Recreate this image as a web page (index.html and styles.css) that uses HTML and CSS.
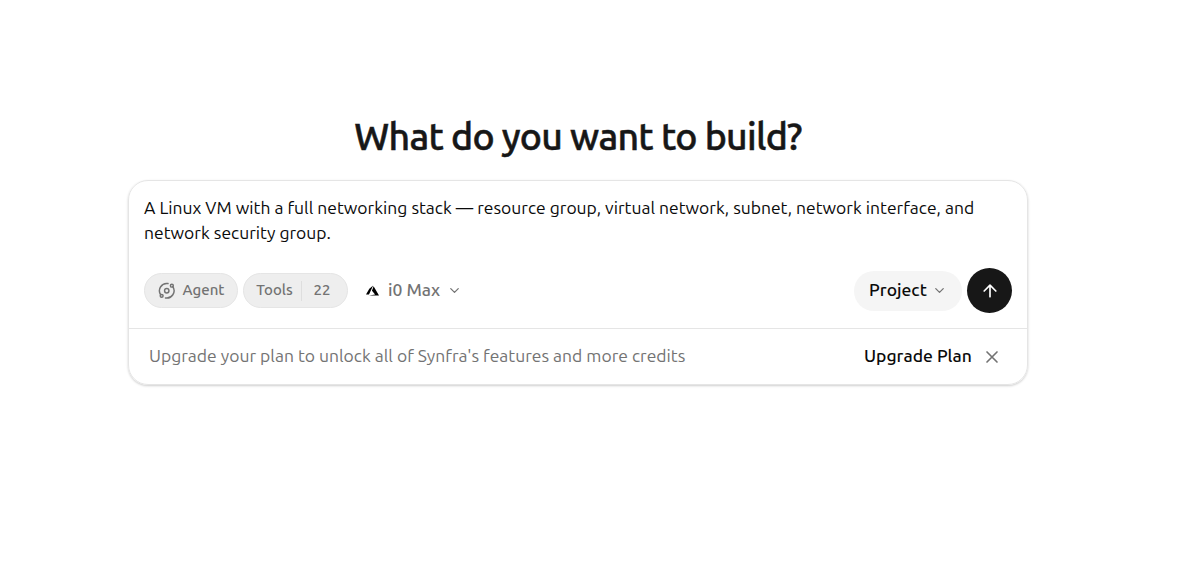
FILE: index.html
```html
<!DOCTYPE html>
<html lang="en">
<head>
    <meta charset="UTF-8">
    <meta name="viewport" content="width=device-width, initial-scale=1.0">
    <title>Synfra</title>
    <link rel="stylesheet" href="styles.css">
</head>
<body>
    <main class="container">
        <h1>What do you want to build?</h1>

        <div class="card">
            <div class="composer">
                <p class="prompt">A Linux VM with a full networking stack — resource group, virtual network, subnet, network interface, and<br>network security group.</p>

                <div class="toolbar">
                    <button class="chip agent">
                        <svg class="icon" width="17.5" height="17.5" viewBox="0 0 24 24">
                            <path d="M20.341 6.484A10 10 0 0 1 10.266 21.85"/>
                            <path d="M3.659 17.516A10 10 0 0 1 13.74 2.152"/>
                            <circle cx="12" cy="12" r="3"/>
                            <circle cx="19" cy="5" r="2"/>
                            <circle cx="5" cy="19" r="2"/>
                        </svg>
                        <span class="label">Agent</span>
                    </button>
                    <button class="chip tools">
                        <span class="label tools-label">Tools</span>
                        <span class="separator"></span>
                        <span class="label">22</span>
                    </button>
                    <button class="model">
                        <svg class="azure" width="13" height="13" viewBox="0 0 24 24">
                            <path d="M5.483 21.3H24L14.025 4.013l-3.038 8.347 5.836 6.938L5.483 21.3zM13.23 2.7L6.105 8.677 0 19.253h5.505v.014L13.23 2.7z"/>
                        </svg>
                        <span class="label model-label">i0 Max</span>
                        <svg class="icon" width="15" height="15" viewBox="0 0 24 24"><path d="m6 9 6 6 6-6"/></svg>
                    </button>

                    <button class="project">
                        <span class="label project-label">Project</span>
                        <svg class="icon" width="15" height="15" viewBox="0 0 24 24"><path d="m6 9 6 6 6-6"/></svg>
                    </button>
                    <button class="send" aria-label="Send">
                        <svg class="icon" width="20" height="20" viewBox="0 0 24 24"><path d="m5 12 7-7 7 7M12 19V5"/></svg>
                    </button>
                </div>
            </div>

            <div class="upgrade">
                <span class="label upgrade-text">Upgrade your plan to unlock all of Synfra's features and more credits</span>
                <a class="label upgrade-link">Upgrade Plan</a>
                <button class="close" aria-label="Close">
                    <svg class="icon" width="20" height="20" viewBox="0 0 24 24"><path d="M18 6 6 18M6 6l12 12"/></svg>
                </button>
            </div>
        </div>
    </main>
</body>
</html>
```

FILE: styles.css
```css
:root {
    --text: #171717;
    --muted: #737373;
    --border: #e5e5e5;
    --chip-bg: #eeeeee;
}

* {
    box-sizing: border-box;
}

body {
    min-height: 100vh;
    margin: 0;
    background: white;
    color: #0a0a0a;
    font-family: Ubuntu, 'Noto Sans', sans-serif;
}

.container {
    width: 900px;
    margin-left: 128px;
    padding-top: 111px;
}

h1 {
    margin: 0 0 19px;
    color: var(--text);
    font-size: 37.5px;
    line-height: 50px;
    font-weight: 500;
    text-align: center;
    letter-spacing: -0.75px;
    -webkit-text-stroke: 0.5px var(--text);
}

.card {
    height: 205px;
    border: 1px solid var(--border);
    border-radius: 20px;
    box-shadow: 0 1px 3px rgba(0, 0, 0, 0.1), 0 1px 2px rgba(0, 0, 0, 0.1);
}

.composer {
    height: 148px;
    padding: 14px 15px;
    border-bottom: 1px solid var(--border);
}

.prompt {
    margin: 0;
    font-size: 17.5px;
    line-height: 25px;
    white-space: nowrap;
}

.toolbar {
    display: flex;
    align-items: center;
    height: 45px;
    margin-top: 23px;
}

button {
    display: flex;
    align-items: center;
    padding: 0;
    border: none;
    background: none;
    color: var(--muted);
    font-family: inherit;
    font-size: 15px;
    line-height: 20px;
    white-space: nowrap;
    cursor: pointer;
}

/* lifts the text so it looks centered beside the icons */
.label {
    padding-bottom: 2px;
}

.icon {
    flex-shrink: 0;
    fill: none;
    stroke: currentColor;
    stroke-width: 2;
    stroke-linecap: round;
    stroke-linejoin: round;
}

.chip {
    height: 35px;
    border: 1px solid var(--border);
    border-radius: 18px;
    background: var(--chip-bg);
    font-weight: 500;
}

.agent {
    width: 94px;
    padding-left: 13px;
    gap: 7px;
}

.tools {
    width: 105px;
    margin-left: 5px;
    padding-left: 12px;
}

.tools-label {
    width: 37px;
}

.separator {
    width: 1px;
    height: 20px;
    margin: 0 12px 0 7.5px;
    background: #dedede;
}

.model {
    margin-left: 18px;
    font-size: 17.5px;
    line-height: 25px;
    font-weight: 500;
}

.azure {
    fill: black;
}

.model-label {
    width: 52px;
    margin: 0 7px 0 9px;
}

.project {
    width: 108px;
    height: 40px;
    margin-left: auto;
    padding-left: 15px;
    border-radius: 20px;
    background: #f5f5f5;
    font-size: 17.5px;
    line-height: 25px;
}

.project-label {
    width: 58px;
    margin-right: 5px;
    color: #0a0a0a;
    font-weight: 500;
}

.send {
    justify-content: center;
    width: 45px;
    height: 45px;
    margin-left: 5px;
    border-radius: 50%;
    background: var(--text);
    color: white;
}

.upgrade {
    display: flex;
    align-items: center;
    height: 55px;
    padding: 0 25px 0 20px;
    font-size: 17.5px;
    line-height: 25px;
    white-space: nowrap;
}

.upgrade-text {
    color: var(--muted);
}

.upgrade-link {
    width: 108px;
    margin-left: auto;
    font-weight: 500;
}

.close {
    margin-left: 10px;
}
```
